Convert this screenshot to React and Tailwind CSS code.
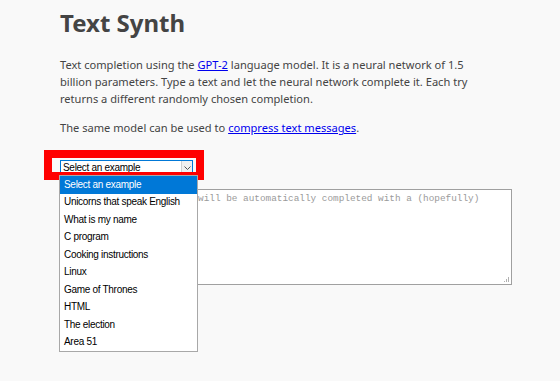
const EXAMPLES = [
  'Select an example',
  'Unicorns that speak English',
  'What is my name',
  'C program',
  'Cooking instructions',
  'Linux',
  'Game of Thrones',
  'HTML',
  'The election',
  'Area 51',
];

function ExampleList() {
  return (
    <ul className="absolute left-[59px] top-[175px] z-20 w-[139px] border border-[#a8a8a8] bg-white font-['Liberation_Sans',Arial,sans-serif] text-[10px] tracking-[-0.3px] text-black">
      {EXAMPLES.map((name, i) => (
        <li
          key={name}
          className={`flex h-[17.5px] items-center whitespace-nowrap px-[4px] leading-none ${i === 0 ? 'bg-[#0078d7] text-white' : ''}`}
        >
          {name}
        </li>
      ))}
    </ul>
  );
}

export default function App() {
  return (
    <div className="relative h-[381px] w-[560px] overflow-hidden bg-[#f9f9f9] text-[#444]">
      <div className="pl-[60px] pt-[8px] font-['Noto_Sans',sans-serif]">
        <h1 className="text-[24px] font-bold leading-[30px] text-[#444]">Text Synth</h1>

        <p className="mt-[18px] whitespace-nowrap text-[11.1px] leading-[17px]">
          Text completion using the{' '}
          <a href="#" className="text-[#0000ee] underline">GPT-2</a>{' '}
          language model. It is a neural network of 1.5<br />
          billion parameters. Type a text and let the neural network complete it. Each try<br />
          returns a different randomly chosen completion.
        </p>

        <p className="mt-[12px] whitespace-nowrap text-[11.1px] leading-[17px]">
          The same model can be used to{' '}
          <a href="#" className="text-[#0000ee] underline">compress text messages</a>.
        </p>

        <div className="mt-[24px] flex h-[16px] w-[133px] items-stretch border border-[#0078d7] bg-white font-['Liberation_Sans',Arial,sans-serif]">
          <span className="flex-1 whitespace-nowrap pl-[2px] text-[10px] leading-[14px] tracking-[-0.3px] text-black">Select an example</span>
          <span className="flex w-[11px] items-center justify-center border-l border-[#cfcfcf] bg-[#f0f0f0]">
            <svg width="7" height="4" viewBox="0 0 7 4" fill="none" stroke="#555" strokeWidth="1">
              <path d="M0.5 0.5 L3.5 3.5 L6.5 0.5" />
            </svg>
          </span>
        </div>

        <div className="relative mt-[13px] h-[96px] w-[452px] border border-[#a0a0a0] bg-white">
          <p className="px-[2px] pt-[2px] font-['Liberation_Mono',monospace] text-[9.4px] leading-[13px] text-[#9a9a9a]">
            Type a text here and it will be automatically completed with a (hopefully)
          </p>
          <svg className="absolute bottom-[1px] right-[1px]" width="8" height="8" viewBox="0 0 8 8">
            <rect x="6" y="2" width="1" height="5" fill="#b0b0b0" />
            <rect x="4" y="4" width="1" height="3" fill="#b0b0b0" />
            <rect x="2" y="6" width="1" height="1" fill="#b0b0b0" />
          </svg>
        </div>
      </div>

      <div className="absolute left-[44px] top-[150px] z-10 h-[30px] w-[160px] border-[8px] border-[#ff0000]" />
      <ExampleList />
    </div>
  );
}
